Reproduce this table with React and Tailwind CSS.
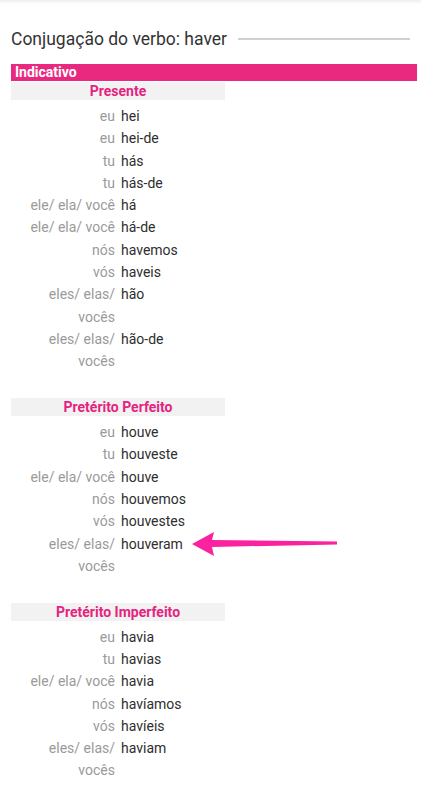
import React from 'react';

const tenses = [
  {
    name: 'Presente',
    rows: [
      ['eu', 'hei'],
      ['eu', 'hei-de'],
      ['tu', 'hás'],
      ['tu', 'hás-de'],
      ['ele/ ela/ você', 'há'],
      ['ele/ ela/ você', 'há-de'],
      ['nós', 'havemos'],
      ['vós', 'haveis'],
      ['eles/ elas/ vocês', 'hão'],
      ['eles/ elas/ vocês', 'hão-de'],
    ],
  },
  {
    name: 'Pretérito Perfeito',
    rows: [
      ['eu', 'houve'],
      ['tu', 'houveste'],
      ['ele/ ela/ você', 'houve'],
      ['nós', 'houvemos'],
      ['vós', 'houvestes'],
      ['eles/ elas/ vocês', 'houveram', true],
    ],
  },
  {
    name: 'Pretérito Imperfeito',
    rows: [
      ['eu', 'havia'],
      ['tu', 'havias'],
      ['ele/ ela/ você', 'havia'],
      ['nós', 'havíamos'],
      ['vós', 'havíeis'],
      ['eles/ elas/ vocês', 'haviam'],
    ],
  },
];

// hand-drawn pointer next to "houveram"
const Arrow = () => (
  <svg
    className="absolute left-[76px] top-[-3px]"
    width="148"
    height="28"
    viewBox="0 0 148 28"
  >
    <path d="M1 14 L23 2 L21 10 L146 11.5 L146 14.5 L21 17 L23 26 Z" fill="#fb22a0" />
  </svg>
);

const Tense = ({ tense }) => (
  <div className="w-[214px] mb-[25.5px]">
    <div className="bg-[#f2f2f2] h-[18px] leading-[18px] text-center text-[14px] font-bold text-[#e5247f]">
      {tense.name}
    </div>
    <div className="mt-[5px]">
      {tense.rows.map(([p, v, arrow], i) => (
        <div key={i} className="flex text-[14px] leading-[22.3px]">
          <div className="w-[104px] pl-[2px] text-right text-[#9a9a9a]">{p}</div>
          <div className="pl-[6px] text-[#2e2e2e] relative">
            {v}
            {arrow && <Arrow />}
          </div>
        </div>
      ))}
    </div>
  </div>
);

export default function App() {
  return (
    <div className="w-[421px] min-h-[800px] bg-white font-['Roboto',sans-serif] relative">
      <div className="h-[4px] bg-gradient-to-b from-[#eeeeee] to-white" />
      <div className="flex items-center pl-[11px] pr-[11px] mt-[24px] h-[22px]">
        <div className="text-[17.5px] text-[#333] whitespace-nowrap">Conjugação do verbo: haver</div>
        <div className="flex-1 h-[2px] bg-[#d0d0d0] ml-[11px]" />
      </div>
      <div className="ml-[11px] mr-[4px] mt-[14px] h-[17px] bg-[#e9287f] text-white font-bold text-[14px] leading-[17px] pl-[4px]">
        Indicativo
      </div>
      <div className="ml-[11px] mt-[1px]">
        {tenses.map((t) => (
          <Tense key={t.name} tense={t} />
        ))}
      </div>
    </div>
  );
}
